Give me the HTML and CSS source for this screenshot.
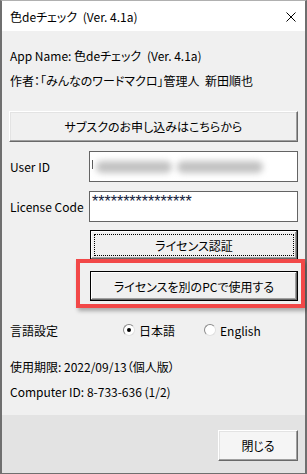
FILE: index.html
```html
<!DOCTYPE html>
<html lang="ja">
<head>
  <meta charset="UTF-8">
  <title>色deチェック</title>
  <link rel="stylesheet" href="styles.css">
</head>
<body>
  <div class="window">
    <!-- Barra de título -->
    <div class="titlebar">
      <span class="title">色deチェック <span class="ver">(Ver. 4.1a)</span></span>
      <svg class="close" width="10" height="10" viewBox="0 0 10 10">
        <path d="M0.5 0.5 L9.5 9.5 M9.5 0.5 L0.5 9.5" stroke="#000" stroke-width="1" fill="none"/>
      </svg>
    </div>

    <div class="content">
      <p class="info first">App Name: 色deチェック <span class="ver">(Ver. 4.1a)</span></p>
      <p class="info">作者：「みんなのワードマクロ」管理人&nbsp;&nbsp;新田順也</p>

      <button class="btn wide">サブスクのお申し込みはこちらから</button>

      <div class="field">
        <label>User ID</label>
        <div class="input">
          <span class="tick"></span>
          <span class="blur b1"></span>
          <span class="blur b2"></span>
        </div>
      </div>
      <div class="field">
        <label>License Code</label>
        <div class="input top">
          <span class="stars">****************</span>
        </div>
      </div>

      <div class="actions">
        <button class="btn strong focus"><span>ライセンス認証</span></button>
        <div class="highlight">
          <button class="btn strong">ライセンスを別のPCで使用する</button>
        </div>
      </div>

      <div class="lang">
        <span class="lang-label">言語設定</span>
        <span class="radio on"></span><span class="radio-text">日本語</span>
        <span class="radio"></span><span class="radio-text">English</span>
      </div>

      <p class="info limit">使用期限: 2022/09/13（個人版）</p>
      <p class="info">Computer ID: 8-733-636 (1/2)</p>
    </div>

    <div class="footer">
      <button class="btn closebtn">閉じる</button>
    </div>
  </div>
</body>
</html>
```

FILE: styles.css
```css
* { box-sizing: border-box; }

body {
  margin: 0;
  font-family: "Noto Sans CJK JP", "Noto Sans", sans-serif;
  font-size: 12px;
  font-feature-settings: "palt";
  color: #000;
}

.window {
  width: 307px;
  height: 474px;
  display: flex;
  flex-direction: column;
  border: 1px solid #6f6f6f;
  border-top-color: #b0b0b0;
  border-left-width: 2px;
  border-right-width: 2px;
}

/* Barra de título */
.titlebar {
  height: 30px;
  background: #fff;
  display: flex;
  align-items: center;
  justify-content: space-between;
  padding: 0 9px 0 8px;
}

.close { margin-top: 1px; }

.ver { margin-left: 3px; }

/* Contenido */
.content {
  flex: 1;
  background: #f0f0f0;
  padding: 0 7px;
  display: flex;
  flex-direction: column;
}

.info {
  margin: 0;
  line-height: 25px;
  height: 25px;
  padding-left: 1px;
}

.info.first { margin-top: 12px; }
.info.limit { margin-top: 14px; }

.btn {
  font-family: inherit;
  font-size: 12px;
  font-feature-settings: "palt";
  color: #000;
  background: #f0f0f0;
  border: 1px solid;
  border-color: #fff #696969 #696969 #fff;
  box-shadow: inset -1px -1px #a0a0a0, inset 1px 1px #e3e3e3;
  padding: 0;
  height: 31px;
}

.wide {
  margin-top: 18px;
  width: 100%;
}

.field {
  display: flex;
  align-items: center;
  margin-top: 9px;
}

.field label {
  width: 80px;
  padding-left: 1px;
}

.input {
  flex: 1;
  height: 31px;
  background: #fff;
  border: 1px solid #646464;
  display: flex;
  align-items: center;
  padding-left: 2px;
  gap: 3px;
}

.input.top { align-items: flex-start; padding-top: 2px; }

.tick {
  width: 1px;
  height: 9px;
  background: #555;
  margin-top: -5px;
}

.blur {
  height: 12px;
  background: #c2c2c2;
  border-radius: 6px;
  filter: blur(3px);
}

.b1 { width: 76px; }
.b2 { width: 86px; margin-left: 2px; }

.stars {
  color: #101838;
  letter-spacing: 0;
  font-family: "Liberation Sans", sans-serif;
  font-size: 16px;
  line-height: 16px;
}

.actions {
  display: flex;
  flex-direction: column;
  align-items: flex-end;
}

.strong {
  width: 208px;
  height: 30px;
  border: 1px solid #000;
  box-shadow: inset -1px -1px #696969, inset 1px 1px #fff, inset -2px -2px #a0a0a0;
}

.focus {
  margin-top: 8px;
  padding: 3px;
}

.focus span {
  display: flex;
  height: 100%;
  align-items: center;
  justify-content: center;
  border: 1px dotted #000;
}

/* Recuadro rojo de resaltado */
.highlight {
  position: relative;
  margin-top: 11px;
}

.highlight::before {
  content: "";
  position: absolute;
  left: -14px;
  top: -12px;
  right: -7px;
  bottom: -7px;
  border: 4px solid #f24848;
  box-shadow: 2px 3px 4px rgba(0, 0, 0, 0.3);
}

.lang {
  display: flex;
  align-items: center;
  height: 20px;
  margin-top: 19px;
  padding-left: 1px;
}

.lang-label { width: 113px; }

.radio {
  width: 12px;
  height: 12px;
  border-radius: 50%;
  background: #fff;
  border: 1px solid;
  border-color: #8a8a8a #e0e0e0 #e0e0e0 #8a8a8a;
  display: flex;
  align-items: center;
  justify-content: center;
}

.radio.on::after {
  content: "";
  width: 4px;
  height: 4px;
  border-radius: 50%;
  background: #000;
}

.radio-text { margin-left: 4px; width: 65px; }

/* Pie */
.footer {
  height: 58px;
  background: #e3e3e3;
  display: flex;
  justify-content: flex-end;
  padding: 15px 7px 0 0;
}

.closebtn {
  width: 80px;
  height: 31px;
  background: #f5f5f5;
}
```
